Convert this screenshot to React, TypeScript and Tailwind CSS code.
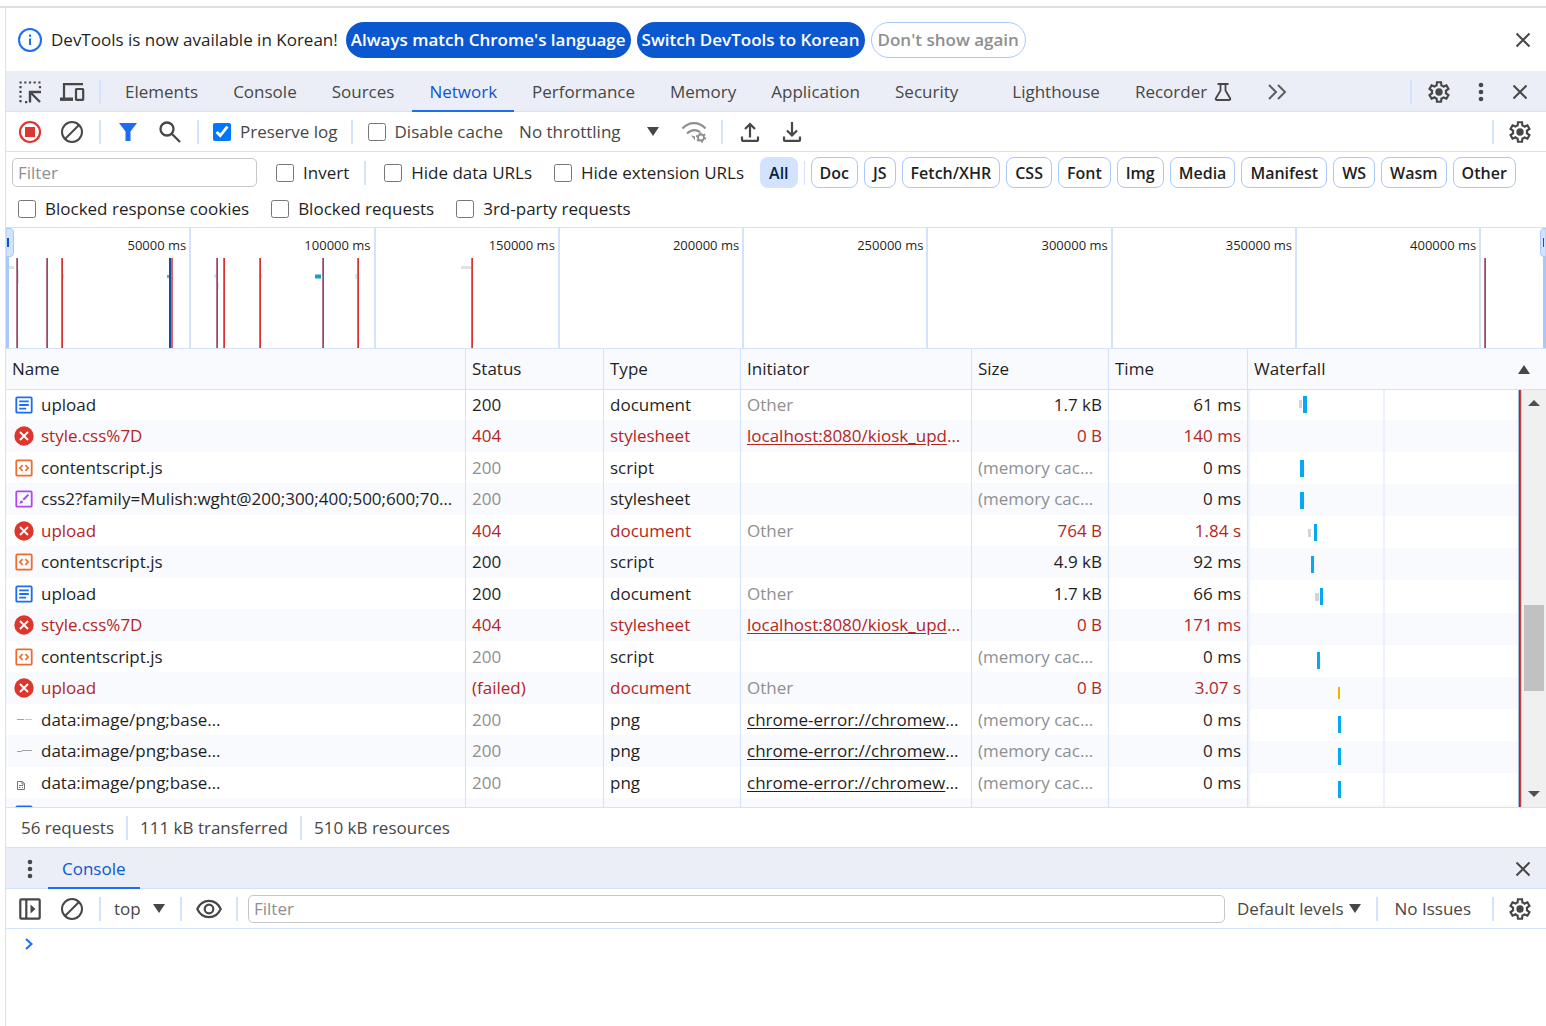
import type { ReactNode } from 'react';

type Kind = 'doc' | 'error' | 'script' | 'style' | 'line' | 'squiggle' | 'page';

interface RequestRow {
  kind: Kind;
  name?: string;
  status?: string;
  type?: string;
  initiator?: string;
  link?: boolean;
  size?: string;
  time?: string;
  cached?: boolean;
}

const requests: RequestRow[] = [
  { kind: 'doc', name: 'upload', status: '200', type: 'document', initiator: 'Other', size: '1.7 kB', time: '61 ms' },
  { kind: 'error', name: 'style.css%7D', status: '404', type: 'stylesheet', initiator: 'localhost:8080/kiosk_upd', link: true, size: '0 B', time: '140 ms' },
  { kind: 'script', name: 'contentscript.js', status: '200', type: 'script', size: '(memory cac…', time: '0 ms', cached: true },
  { kind: 'style', name: 'css2?family=Mulish:wght@200;300;400;500;600;70…', status: '200', type: 'stylesheet', size: '(memory cac…', time: '0 ms', cached: true },
  { kind: 'error', name: 'upload', status: '404', type: 'document', initiator: 'Other', size: '764 B', time: '1.84 s' },
  { kind: 'script', name: 'contentscript.js', status: '200', type: 'script', size: '4.9 kB', time: '92 ms' },
  { kind: 'doc', name: 'upload', status: '200', type: 'document', initiator: 'Other', size: '1.7 kB', time: '66 ms' },
  { kind: 'error', name: 'style.css%7D', status: '404', type: 'stylesheet', initiator: 'localhost:8080/kiosk_upd', link: true, size: '0 B', time: '171 ms' },
  { kind: 'script', name: 'contentscript.js', status: '200', type: 'script', size: '(memory cac…', time: '0 ms', cached: true },
  { kind: 'error', name: 'upload', status: '(failed)', type: 'document', initiator: 'Other', size: '0 B', time: '3.07 s' },
  { kind: 'line', name: 'data:image/png;base…', status: '200', type: 'png', initiator: 'chrome-error://chromew', link: true, size: '(memory cac…', time: '0 ms', cached: true },
  { kind: 'squiggle', name: 'data:image/png;base…', status: '200', type: 'png', initiator: 'chrome-error://chromew', link: true, size: '(memory cac…', time: '0 ms', cached: true },
  { kind: 'page', name: 'data:image/png;base…', status: '200', type: 'png', initiator: 'chrome-error://chromew', link: true, size: '(memory cac…', time: '0 ms', cached: true },
  { kind: 'doc' },
];

const tabs = ['Elements', 'Console', 'Sources', 'Network', 'Performance', 'Memory', 'Application', 'Security', 'Lighthouse'];

const resourceTypes = ['Doc', 'JS', 'Fetch/XHR', 'CSS', 'Font', 'Img', 'Media', 'Manifest', 'WS', 'Wasm', 'Other'];

const timeLabels = [50000, 100000, 150000, 200000, 250000, 300000, 350000, 400000];

// x, y, width, height, colour of every bar in the waterfall column
const bars: [number, number, number, number, string][] = [
  [51, 10, 3, 8, '#d3d3d3'],
  [55, 6, 4, 17, '#03a9f4'],
  [52, 70, 4, 17, '#03a9f4'],
  [52, 102, 4, 17, '#03a9f4'],
  [60, 139, 3, 8, '#d3d3d3'],
  [66, 134, 3, 17, '#03a9f4'],
  [63, 166, 3, 17, '#03a9f4'],
  [67, 203, 4, 8, '#d3d3d3'],
  [72, 198, 3, 17, '#03a9f4'],
  [69, 262, 3, 17, '#03a9f4'],
  [90, 297, 2, 12, '#f0b400'],
  [90, 326, 3, 17, '#03a9f4'],
  [90, 358, 3, 17, '#03a9f4'],
  [90, 391, 3, 17, '#03a9f4'],
];

const bands = [30, 94, 158, 223, 287, 351, 415];

const loadMarks = [10, 40, 55, 210, 217, 253, 316, 351, 465, 1478];

function Divider() {
  return <span className="mx-1.5 h-6 w-0.5 shrink-0 bg-[#d3e3fd]" />;
}

function IconButton({ label, narrow, children }: { label: string; narrow?: boolean; children: ReactNode }) {
  return (
    <button
      type="button"
      aria-label={label}
      className={`flex h-8 shrink-0 items-center justify-center text-[#474747] ${narrow ? 'w-9' : 'w-[42px]'}`}
    >
      {children}
    </button>
  );
}

function Check({ label, checked }: { label: string; checked?: boolean }) {
  return (
    <label className="flex shrink-0 items-center gap-[9px] whitespace-nowrap">
      <input type="checkbox" defaultChecked={checked} className="size-[18px] accent-[#0075ff]" />
      {label}
    </label>
  );
}

function GearIcon() {
  return (
    <svg className="size-[26px]" viewBox="0 -960 960 960" fill="currentColor">
      <path d="m370-80-16-128q-13-5-24.5-12T307-235l-119 50L78-375l103-78q-1-7-1-13.5v-27q0-6.5 1-13.5L78-585l110-190 119 50q11-8 23-15t24-12l16-128h220l16 128q13 5 24.5 12t22.5 15l119-50 110 190-103 78q1 7 1 13.5v27q0 6.5-2 13.5l103 78-110 190-118-50q-11 8-23 15t-24 12L590-80H370Zm70-80h79l14-106q31-8 57.5-23.5T639-327l99 41 39-68-86-65q5-14 7-29.5t2-31.5q0-16-2-31.5t-7-29.5l86-65-39-68-99 42q-22-23-48.5-38.5T533-694l-13-106h-79l-14 106q-31 8-57.5 23.5T321-633l-99-41-39 68 86 64q-5 15-7 30t-2 32q0 16 2 31t7 30l-86 65 39 68 99-42q22 23 48.5 38.5T427-266l13 106Z" />
      <circle cx="480" cy="-480" r="135" />
    </svg>
  );
}

function CloseIcon() {
  return (
    <svg className="size-4" viewBox="0 0 16 16" fill="none" stroke="currentColor" strokeWidth="2">
      <path d="M1.5 1.5l13 13M14.5 1.5l-13 13" />
    </svg>
  );
}

function KebabIcon() {
  return (
    <svg className="h-5 w-1.5" viewBox="0 0 6 20" fill="currentColor">
      <circle cx="3" cy="3" r="2.3" />
      <circle cx="3" cy="10" r="2.3" />
      <circle cx="3" cy="17" r="2.3" />
    </svg>
  );
}

function ClearIcon() {
  return (
    <svg className="size-6" viewBox="0 0 24 24" fill="none" stroke="currentColor" strokeWidth="2">
      <circle cx="12" cy="12" r="10" />
      <path d="M5 19L19 5" />
    </svg>
  );
}

function ArrowDown() {
  return (
    <svg className="pointer-events-none h-[9px] w-3 shrink-0" viewBox="0 0 12 9" fill="#474747">
      <path d="M0 0h12L6 9z" />
    </svg>
  );
}

function FileIcon({ kind }: { kind: Kind }) {
  switch (kind) {
    case 'error':
      return (
        <svg className="size-5" viewBox="0 0 20 20">
          <circle cx="10" cy="10" r="9.7" fill="#dc362e" />
          <path d="M6 6l8 8M14 6l-8 8" stroke="#fff" strokeWidth="1.8" />
        </svg>
      );
    case 'doc':
      return (
        <svg className="size-5" viewBox="0 0 20 20" fill="none" stroke="#1b6ef3" strokeWidth="1.8">
          <rect x="2.3" y="2.3" width="15.4" height="15.4" rx="1" />
          <path d="M5.2 6.3h9.6M5.2 10h9.6M5.2 13.7h7" />
        </svg>
      );
    case 'script':
      return (
        <svg className="size-5" viewBox="0 0 20 20" fill="none" stroke="#ec6d2e" strokeWidth="1.8">
          <rect x="2.3" y="2.3" width="15.4" height="15.4" rx="1" />
          <path d="M8.6 7.2L5.9 10l2.7 2.8M11.4 7.2l2.7 2.8-2.7 2.8" strokeWidth="1.7" />
        </svg>
      );
    case 'style':
      return (
        <svg className="size-5" viewBox="0 0 20 20" fill="none" stroke="#ae46f2" strokeWidth="1.8">
          <rect x="2.3" y="2.3" width="15.4" height="15.4" rx="1" />
          <path d="M14.4 5.6L9.3 10.8" strokeWidth="2" />
          <path d="M5.2 14.4c1-.3.6-2.6 2.2-2.8 1.3-.1 2 1.2 1.2 2.2-.8.9-2.3.9-3.4.6z" fill="#ae46f2" stroke="none" />
        </svg>
      );
    case 'line':
      return (
        <svg className="size-5" viewBox="0 0 20 20" stroke="#c4c7c5">
          <path d="M3 9.5h7" stroke="#a3a3a3" />
          <path d="M11 9.5h7" />
        </svg>
      );
    case 'squiggle':
      return (
        <svg className="size-5" viewBox="0 0 20 20" fill="none" stroke="#a3a3a3">
          <path d="M3 10.5h4l2-1h9" />
        </svg>
      );
    case 'page':
      return (
        <svg className="size-5" viewBox="0 0 20 20" fill="none" stroke="#757575">
          <path d="M3.5 8.500h5l2 2v6h-7zM8 8.500v2.500h2.500M5 12.500h4M5 14.500h1.500M8 14.500h1" />
        </svg>
      );
  }
}

function Infobar() {
  return (
    <div className="flex h-[63px] items-center pl-3 pr-[11px]">
      <svg className="size-6 shrink-0" viewBox="0 0 24 24" fill="none" stroke="#1b6ef3" strokeWidth="2">
        <circle cx="12" cy="12" r="11" />
        <path d="M12 10.5v6.500M12 6.500v2.200" />
      </svg>
      <p className="ml-[9px] mr-2 whitespace-nowrap text-[#1f1f1f]">DevTools is now available in Korean!</p>
      <div className="flex gap-1.5 whitespace-nowrap font-semibold">
        <button type="button" className="h-9 rounded-full bg-[#0b57d0] px-[5px] text-white">
          Always match Chrome's language
        </button>
        <button type="button" className="h-9 rounded-full bg-[#0b57d0] px-[5px] text-white">
          Switch DevTools to Korean
        </button>
        <button type="button" className="h-9 rounded-full border border-[#a8c7fa] px-1.5 text-[#8f8f8f]">
          Don't show again
        </button>
      </div>
      <button type="button" aria-label="Close infobar" className="ml-auto flex size-6 items-center justify-center text-[#474747]">
        <CloseIcon />
      </button>
    </div>
  );
}

function TabBar() {
  return (
    <div className="flex h-[41px] items-center bg-[#ebeef6] pl-[3px] pr-2 shadow-[inset_0_-1px_#d3e3fd]">
      <IconButton label="Inspect element">
        <svg className="size-6" viewBox="0 0 24 24" fill="none" stroke="currentColor" strokeWidth="2.2">
          <path d="M1.500 2.500h22M2.500 6v17" strokeDasharray="2.2 2.5" />
          <path d="M22 6v4M7 22.200h2.500" strokeDasharray="2.2 2.5" />
          <path d="M12 22.500V12H23M12.500 12.500l9.500 9.500" strokeWidth="2.4" />
        </svg>
      </IconButton>
      <IconButton label="Toggle device toolbar">
        <svg className="h-5 w-[26px]" viewBox="0 0 26 20" fill="none" stroke="currentColor" strokeWidth="2.2">
          <path d="M24 2.200H5v15" />
          <path d="M1 17.200h13" strokeWidth="3.4" />
          <rect x="17" y="7" width="7.2" height="10.8" rx=".5" />
        </svg>
      </IconButton>
      <Divider />
      <nav className="ml-px flex h-full shrink-0 gap-px text-[#474747]" role="tablist">
        {tabs.map((tab) => (
          <button
            key={tab}
            type="button"
            role="tab"
            aria-selected={tab === 'Network'}
            className={`border-y-2 border-t-transparent pl-[17px] ${tab === 'Security' ? 'pr-9' : 'pr-[17px]'} ${
              tab === 'Network' ? 'border-b-[#1b6ef3] text-[#0b57d0]' : 'border-b-transparent'
            }`}
          >
            {tab}
          </button>
        ))}
        <button type="button" role="tab" className="flex items-center gap-[7px] pl-[17px] pr-6">
          Recorder
          <svg className="h-5 w-[18px]" viewBox="0 0 18 20" fill="none" stroke="currentColor" strokeWidth="1.8">
            <path d="M3.500 2h11M6.500 2v6.500L1.800 16.500q-.6 1.500 1 1.500h12.400q1.600 0 1-1.500L11.500 8.500V2" />
          </svg>
        </button>
      </nav>
      <IconButton label="More tabs">
        <svg className="h-4 w-5" viewBox="0 0 20 16" fill="none" stroke="#5f5f5f" strokeWidth="2">
          <path d="M2 1l7 7-7 7M11 1l7 7-7 7" />
        </svg>
      </IconButton>
      <div className="ml-auto flex items-center">
        <Divider />
        <IconButton label="Settings">
          <GearIcon />
        </IconButton>
        <IconButton label="Customize and control DevTools">
          <KebabIcon />
        </IconButton>
        <IconButton label="Close" narrow>
          <CloseIcon />
        </IconButton>
      </div>
    </div>
  );
}

function NetworkToolbar() {
  return (
    <div className="flex h-10 items-center border-b border-[#d3e3fd] pl-[3px] pr-2 text-[#474747]">
      <IconButton label="Stop recording network log">
        <svg className="size-6" viewBox="0 0 24 24">
          <circle cx="12" cy="12" r="10" fill="none" stroke="#dc362e" strokeWidth="2.2" />
          <rect x="7" y="7" width="10" height="10" fill="#dc362e" />
        </svg>
      </IconButton>
      <IconButton label="Clear network log">
        <ClearIcon />
      </IconButton>
      <Divider />
      <IconButton label="Filter">
        <svg className="h-[18px] w-5" viewBox="0 0 20 18" fill="#1b6ef3">
          <path d="M1 0h18l-6.500 8.500V18h-5V8.500z" />
        </svg>
      </IconButton>
      <IconButton label="Search">
        <svg className="size-[22px]" viewBox="0 0 22 22" fill="none" stroke="currentColor" strokeWidth="2.3">
          <circle cx="8" cy="8" r="6.5" />
          <path d="M12.500 12.500l8.500 8.500" />
        </svg>
      </IconButton>
      <Divider />
      <div className="flex items-center pl-2 pr-[7px]">
        <Check label="Preserve log" checked />
      </div>
      <Divider />
      <div className="flex items-center pl-[9px]">
        <Check label="Disable cache" />
      </div>
      <div className="ml-4 flex shrink-0 items-center">
        <select aria-label="Throttling" className="-mr-3 w-[140px] appearance-none">
          <option>No throttling</option>
        </select>
        <ArrowDown />
      </div>
      <span className="w-3.5" />
      <IconButton label="More network conditions">
        <svg className="h-[22px] w-[26px]" viewBox="0 0 26 22" fill="none" stroke="#8f8f8f" strokeWidth="2.2">
          <path d="M1.500 7.500Q6.500 2.200 13 2.200t11.500 5.300M6 12.500q6.500-6 13-1.500" />
          <path d="M14 15.500l-4-1.200L14 19.500z" fill="#8f8f8f" stroke="none" />
          <circle cx="20" cy="16.500" r="3" strokeWidth="1.8" />
          <circle cx="20" cy="16.500" r="4.3" strokeWidth="1.8" strokeDasharray="2 2.5" />
        </svg>
      </IconButton>
      <Divider />
      <IconButton label="Import HAR file">
        <svg className="size-5" viewBox="0 0 20 20" fill="none" stroke="currentColor" strokeWidth="2.2">
          <path d="M10 15.500V2M5 7l5-5 5 5M2 14.500V18q0 .8.8.8h14.400q.8 0 .8-.8V14.500" />
        </svg>
      </IconButton>
      <IconButton label="Export HAR file">
        <svg className="size-5" viewBox="0 0 20 20" fill="none" stroke="currentColor" strokeWidth="2.2">
          <path d="M10 0v13.500M5 8.500l5 5 5-5M2 14.500V18q0 .8.8.8h14.400q.8 0 .8-.8V14.500" />
        </svg>
      </IconButton>
      <div className="ml-auto flex items-center">
        <Divider />
        <span className="w-0.5" />
        <IconButton label="Network settings" narrow>
          <GearIcon />
        </IconButton>
      </div>
    </div>
  );
}

function FilterBar() {
  return (
    <div className="border-b border-[#d3e3fd] pb-0.5 text-[#1f1f1f]">
      <div className="flex h-[41px] items-center pl-1.5">
        <input
          type="text"
          aria-label="Filter"
          placeholder="Filter"
          className="h-[29px] w-[245px] rounded-[5px] border border-[#c7c7c7] px-[5px] outline-none placeholder:text-[#8f8f8f]"
        />
        <div className="ml-[19px] mr-[9px] flex items-center">
          <Check label="Invert" />
        </div>
        <Divider />
        <div className="ml-3 flex items-center gap-[22px]">
          <Check label="Hide data URLs" />
          <Check label="Hide extension URLs" />
        </div>
        <div className="ml-4 flex items-center text-base font-semibold">
          <button type="button" className="h-[31px] rounded-lg bg-[#d3e3fd] px-[9px] text-[#041e49]">
            All
          </button>
          <span className="mx-1.5 h-6 w-px bg-[#d3e3fd]" />
          <div className="flex gap-1.5">
            {resourceTypes.map((type) => (
              <button key={type} type="button" className="h-[31px] rounded-lg border border-[#a8c7fa] px-2">
                {type}
              </button>
            ))}
          </div>
        </div>
      </div>
      <div className="flex h-8 items-center gap-[22px] pl-3">
        <Check label="Blocked response cookies" />
        <Check label="Blocked requests" />
        <Check label="3rd-party requests" />
      </div>
    </div>
  );
}

function Overview() {
  return (
    <div className="relative h-[121px] border-b border-[#d3e3fd]">
      <div className="ml-px grid h-full grid-cols-[repeat(8,37fr)_13fr]">
        {timeLabels.map((label) => (
          <div key={label} className="border-r-2 border-[#d3e3fd] pr-[3px] pt-[9px] text-right text-[13px] leading-4 text-[#1f1f1f]">
            {label} ms
          </div>
        ))}
      </div>
      <svg className="absolute inset-0 size-full" viewBox="0 0 1540 120" preserveAspectRatio="none">
        <path d="M3 39.500h5M455 39.500h10" stroke="#e1e1e1" strokeWidth="3" />
        <path d="M161 48.500h3" stroke="#5fbf7a" strokeWidth="3" />
        <path d="M309 48.500h6" stroke="#12a4c4" strokeWidth="4" />
        <path d="M12 42v14M57 46v5M209 46v4M212 55v6M255 46v4M350 46v5" stroke="#dbe5f8" strokeWidth="2" />
        {loadMarks.map((x) => (
          <g key={x}>
            <rect x={x} y="30" width="1" height="90" fill="#b5738c" />
            <rect x={x + 1} y="30" width="1" height="90" fill="#d8322f" />
          </g>
        ))}
        <rect x="163" y="30" width="2" height="90" fill="#0b4fae" />
        <rect x="165" y="30" width="2" height="90" fill="#e0605c" />
        <rect x="0" y="28" width="3" height="92" fill="#a8c7fa" />
        <path d="M0 .5h4q3.500 0 3.500 3.500v21.500q0 3-3.500 3h-4z" fill="#d3e3fd" stroke="#a8c7fa" />
        <rect x="1" y="10" width="2" height="9" fill="#0b57d0" />
        <rect x="1537" y="28" width="3" height="92" fill="#a8c7fa" />
        <path d="M1540 .5h-2q-3.500 0-3.500 3.500v21.500q0 3 3.500 3h2z" fill="#d3e3fd" stroke="#a8c7fa" />
        <rect x="1537" y="10" width="1" height="9" fill="#0b57d0" />
      </svg>
    </div>
  );
}

function RequestTable() {
  return (
    <table className="w-full table-fixed border-separate border-spacing-0 text-[#1f1f1f]">
      <colgroup>
        <col />
        <col className="w-[138px]" />
        <col className="w-[137px]" />
        <col className="w-[231px]" />
        <col className="w-[137px]" />
        <col className="w-[139px]" />
      </colgroup>
      <thead>
        <tr className="h-[41px] bg-[#f8fafd] text-left">
          {['Name', 'Status', 'Type', 'Initiator', 'Size', 'Time'].map((title) => (
            <th key={title} scope="col" className="border-b border-r border-[#d3e3fd] px-1.5 py-0 font-normal">
              {title}
            </th>
          ))}
        </tr>
      </thead>
      <tbody className="leading-6">
        {requests.map((request, index) => {
          const cell = 'truncate border-r border-[#d3e3fd] px-1.5 py-0';
          const gray = 'text-[#8f8f8f]';
          return (
            <tr
              key={index}
              className={`h-[31px] first:h-[30px] even:h-8 even:bg-[#f8fafd] ${request.kind === 'error' ? 'text-[#b3261e]' : ''}`}
            >
              <td className={cell}>
                <div className="flex items-center gap-[7px] pl-0.5">
                  <FileIcon kind={request.kind} />
                  {request.name}
                </div>
              </td>
              <td className={`${cell} ${request.cached ? gray : ''}`}>{request.status}</td>
              <td className={cell}>{request.type}</td>
              <td className={`${cell} ${request.link ? '' : gray}`}>
                {request.link ? (
                  <>
                    <a href="#initiator" className="underline underline-offset-2">
                      {request.initiator}
                    </a>
                    …
                  </>
                ) : (
                  request.initiator
                )}
              </td>
              <td className={`${cell} ${request.cached ? gray : 'text-right'}`}>{request.size}</td>
              <td className={`${cell} text-right`}>{request.time}</td>
            </tr>
          );
        })}
      </tbody>
    </table>
  );
}

function Waterfall() {
  return (
    <div className="flex w-[298px] shrink-0 flex-col">
      <div className="flex h-[41px] shrink-0 items-center justify-between border-b border-[#d3e3fd] bg-[#f8fafd] pl-1.5 pr-4 text-[#1f1f1f]">
        Waterfall
        <svg className="h-[9px] w-3" viewBox="0 0 12 9" fill="#474747">
          <path d="M0 9h12L6 0z" />
        </svg>
      </div>
      <div className="flex min-h-0 flex-1">
        <svg className="h-[417px] w-[274px]" viewBox="0 0 274 417">
          {bands.map((y) => (
            <rect key={y} x="2" y={y} width="268" height="32" fill="#f8fafd" />
          ))}
          <path d="M1 0v417M136 0v417" stroke="#e6eefc" strokeWidth="1.5" />
          {bars.map(([x, y, width, height, color], index) => (
            <rect key={index} x={x} y={y} width={width} height={height} fill={color} />
          ))}
          <rect x="270.6" width="1.6" height="417" fill="#1a57ad" />
          <rect x="272" width="1.3" height="417" fill="#c2404a" />
        </svg>
        <div className="flex w-6 flex-col items-center bg-[#f0f0f0]">
          <svg className="my-2.5 h-1.5 w-3 shrink-0" viewBox="0 0 12 6" fill="#505050">
            <path d="M0 6h12L6 0z" />
          </svg>
          <div className="flex w-5 flex-1 flex-col">
            <div className="flex-[190]" />
            <div className="h-[86px] bg-[#c1c1c1]" />
            <div className="flex-[91]" />
          </div>
          <svg className="my-2.5 h-1.5 w-3 shrink-0" viewBox="0 0 12 6" fill="#505050">
            <path d="M0 0h12L6 6z" />
          </svg>
        </div>
      </div>
    </div>
  );
}

function Drawer() {
  return (
    <section className="text-[#474747]">
      <div className="flex h-[42px] items-center border-t border-[#d3e3fd] bg-[#ebeef6] pl-[3px] pr-[11px] shadow-[inset_0_-1px_#d3e3fd]">
        <IconButton label="More tools">
          <KebabIcon />
        </IconButton>
        <button type="button" className="-ml-[3px] h-full border-y-2 border-t-transparent border-b-[#1b6ef3] px-3.5 text-[#0b57d0]">
          Console
        </button>
        <button type="button" aria-label="Close drawer" className="ml-auto flex size-6 items-center justify-center">
          <CloseIcon />
        </button>
      </div>
      <div className="flex h-10 items-center border-b border-[#d3e3fd] pl-[3px] pr-2">
        <IconButton label="Show console sidebar">
          <svg className="size-[22px]" viewBox="0 0 22 22" fill="none" stroke="currentColor" strokeWidth="2.2">
            <rect x="1.3" y="1.3" width="19.4" height="19.4" rx="1" />
            <path d="M7.300 1v20" />
            <path d="M11.500 6.500v9l5-4.500z" fill="currentColor" stroke="none" />
          </svg>
        </IconButton>
        <IconButton label="Clear console">
          <ClearIcon />
        </IconButton>
        <Divider />
        <div className="ml-[7px] mr-[9px] flex shrink-0 items-center">
          <select aria-label="Context" className="-mr-3 w-[51px] appearance-none">
            <option>top</option>
          </select>
          <ArrowDown />
        </div>
        <Divider />
        <IconButton label="Create live expression">
          <svg className="h-5 w-[26px]" viewBox="0 0 26 20" fill="none" stroke="currentColor" strokeWidth="2.2">
            <path d="M1.300 10Q5 1.800 13 1.800T24.700 10Q21 18.200 13 18.200T1.300 10z" />
            <circle cx="13" cy="10" r="4.3" />
          </svg>
        </IconButton>
        <Divider />
        <input
          type="text"
          aria-label="Console filter"
          placeholder="Filter"
          className="ml-1 h-7 min-w-0 flex-1 rounded-[5px] border border-[#c7c7c7] px-[5px] outline-none placeholder:text-[#8f8f8f]"
        />
        <button type="button" className="ml-3 mr-[9px] flex shrink-0 items-center gap-[5px]">
          Default levels
          <ArrowDown />
        </button>
        <Divider />
        <button type="button" className="ml-[11px] mr-[15px] shrink-0">
          No Issues
        </button>
        <Divider />
        <span className="w-0.5" />
        <IconButton label="Console settings" narrow>
          <GearIcon />
        </IconButton>
      </div>
      <div className="flex h-[30px] items-center pl-[18px]">
        <svg className="h-3 w-2.5 shrink-0" viewBox="0 0 10 12" fill="none" stroke="#1b6ef3" strokeWidth="2">
          <path d="M2 1l5.500 5L2 11" />
        </svg>
        <input type="text" aria-label="Console prompt" className="ml-2 min-w-0 flex-1 outline-none" />
      </div>
    </section>
  );
}

export default function App() {
  return (
    <div className="flex min-h-screen flex-col overflow-x-hidden bg-white pt-1.5 font-['Open_Sans','Noto_Sans',sans-serif] text-[17px] leading-6">
      <div className="h-0.5 bg-[#e0e0e0]" />
      <main className="ml-[5px] flex-1 border-l border-[#d3e3fd]">
        <Infobar />
        <TabBar />
        <NetworkToolbar />
        <FilterBar />
        <Overview />
        <div className="flex h-[458px] overflow-hidden">
          <div className="min-w-0 flex-1">
            <RequestTable />
          </div>
          <Waterfall />
        </div>
        <div className="flex h-10 items-center border-t border-[#d3e3fd] pl-[15px] text-[#474747]">
          <span className="pr-1.5">56 requests</span>
          <Divider />
          <span className="px-1.5">111 kB transferred</span>
          <Divider />
          <span className="px-1.5">510 kB resources</span>
        </div>
        <Drawer />
      </main>
    </div>
  );
}
